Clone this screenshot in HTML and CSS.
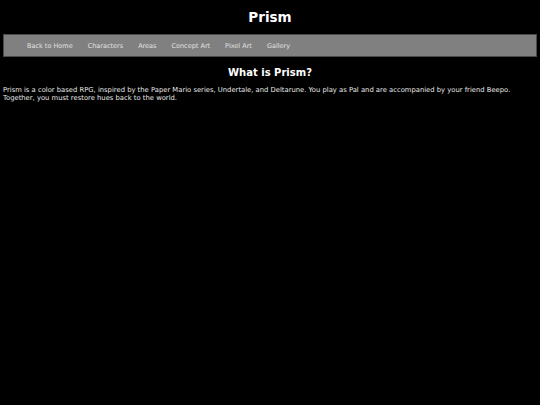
FILE: index.html
```html
<!DOCTYPE html>
<html lang="en">
<head>
  <meta charset="UTF-8" />
  <meta name="viewport" content="width=device-width, initial-scale=1.0" />
  <title>Prism</title>
  <link rel="stylesheet" href="styles.css">
</head>
<body>
  <h1>Prism</h1>
  <nav class="navbar">
    <a href="#">Back to Home</a>
    <a href="#">Characters</a>
    <a href="#">Areas</a>
    <a href="#">Concept Art</a>
    <a href="#">Pixel Art</a>
    <a href="#">Gallery</a>
  </nav>
  <h2>What is Prism?</h2>
  <p>Prism is a color based RPG, inspired by the Paper Mario series, Undertale, and Deltarune. You play as Pal and are accompanied by your friend Beepo. Together, you must restore hues back to the world.</p>
</body>
</html>
```

FILE: styles.css
```css
body {
  font-family: "DejaVu Sans", Verdana, sans-serif;
  background: #000;
  color: #fff;
  margin: 0;
  padding: 0 3px;
}
h1 {
  font-size: 13.5px;
  text-align: center;
  margin: 0;
  padding: 9px 0 9px;
}
.navbar {
  display: flex;
  gap: 15px;
  align-items: center;
  height: 21px;
  padding-left: 23px;
  background: #808080;
  border: 1px solid #4a4a4a;
}
.navbar a {
  color: #e0e0e0;
  text-decoration: none;
  font-size: 6.5px;
}
h2 {
  font-size: 10px;
  text-align: center;
  margin: 10px 0 8px;
}
p {
  font-size: 6.8px;
  line-height: 8px;
  margin: 0;
  color: #e8e8e8;
}
```
